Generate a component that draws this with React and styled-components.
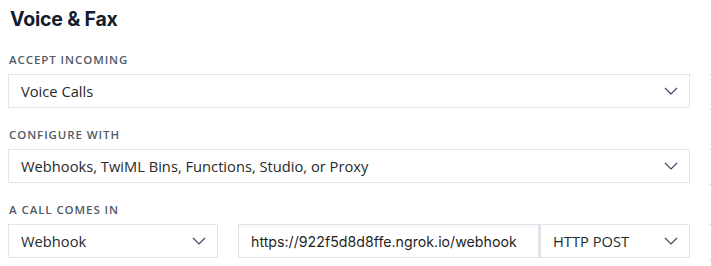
import styled, { createGlobalStyle } from "styled-components";

const GlobalStyle = createGlobalStyle`
    body {
        margin: 0;
        background: #fff;
        overflow: hidden;
    }
`

function Chevron () {
    return (
        <svg width="14" height="8" viewBox="0 0 14 8" fill="none">
            <path d="M1 1L7 7L13 1" stroke="#394762" strokeWidth="1.2" />
        </svg>
    )
}

function Select ({ value, width }) {
    return (
        <SelectBox width={width}>
            <span>{value}</span>
            <Chevron />
        </SelectBox>
    )
}

function App () {
    return (
        <>
            <GlobalStyle />
            <Page>
                <Tittle>Voice &amp; Fax</Tittle>
                <Field>
                    <Label>Accept incoming</Label>
                    <Row>
                        <Select value="Voice Calls" />
                        <Ghost />
                    </Row>
                </Field>
                <Field>
                    <Label>Configure with</Label>
                    <Row>
                        <Select value="Webhooks, TwiML Bins, Functions, Studio, or Proxy" />
                        <Ghost />
                    </Row>
                </Field>
                <Field>
                    <Label>A call comes in</Label>
                    <Row>
                        <Select value="Webhook" width="210px" />
                        <UrlGroup>
                            <UrlInput defaultValue="https://922f5d8d8ffe.ngrok.io/webhook" />
                            <Select value="HTTP POST" width="150px" />
                        </UrlGroup>
                        <Ghost />
                    </Row>
                </Field>
            </Page>
        </>
    )
}

const Page = styled.main`
    padding: 7px 0 0 8px;
    width: 711px;
    box-sizing: border-box;
    display: flex;
    flex-direction: column;
`

const Tittle = styled.h2`
    margin: 0 0 22px 2px;
    font-family: Inter, sans-serif;
    font-size: 19.5px;
    font-weight: 700;
    line-height: 24px;
    color: #121c2d;
    letter-spacing: -0.01em;
`

const Field = styled.div`
    display: flex;
    flex-direction: column;
    margin-bottom: 18px;
`

const Label = styled.label`
    margin: 0 0 7px 1px;
    font-family: "Open Sans", sans-serif;
    font-size: 11.5px;
    font-weight: 600;
    line-height: 14px;
    letter-spacing: 0.08em;
    text-transform: uppercase;
    color: #505a66;
`

const Row = styled.div`
    display: flex;
    align-items: stretch;
    gap: 20px;
`

const SelectBox = styled.div`
    box-sizing: border-box;
    height: 34px;
    width: ${({ width }) => width || "682px"};
    flex: none;
    padding: 0 11px 0 12px;
    border: 1px solid #e1e3ea;
    background: #fff;
    display: flex;
    align-items: center;
    justify-content: space-between;

    span {
        font-family: "Open Sans", sans-serif;
        font-size: 14.7px;
        color: #282a2b;
        white-space: nowrap;
    }
`

const UrlGroup = styled.div`
    display: flex;
`

const UrlInput = styled.input`
    box-sizing: border-box;
    width: 302px;
    height: 34px;
    padding: 0 12px;
    border: 1px solid #e1e3ea;
    border-right: 2px solid #e1e3ea;
    box-shadow: inset 0 2px 2px rgba(0, 0, 0, 0.04);
    font-family: Inter, sans-serif;
    font-size: 14.2px;
    color: #1f1f1f;
    outline: none;
`

const Ghost = styled.div`
    width: 20px;
    height: 34px;
    flex: none;
    border-top: 1px solid #e1e3ea;
    border-bottom: 1px solid #e1e3ea;
    margin-left: -1px;
`

export default App
